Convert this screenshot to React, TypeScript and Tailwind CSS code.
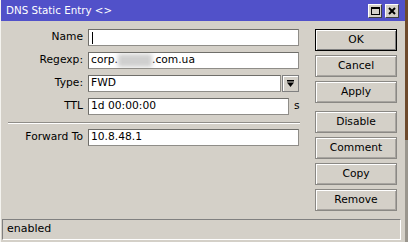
const Field = ({ children, className = "" }: { children?: React.ReactNode; className?: string }) => (
  <div
    className={`h-[17px] bg-white border border-[#8f8d88] border-t-[#6f6e6a] border-l-[#6f6e6a] flex items-center pl-[2px] text-black whitespace-nowrap overflow-hidden ${className}`}
  >
    {children}
  </div>
);

const Btn = ({ label, primary = false }: { label: string; primary?: boolean }) => (
  <button
    className={`h-[22px] w-[82px] bg-[#d4d0c8] text-black flex items-center justify-center border ${
      primary ? "border-black shadow-[inset_1px_1px_0_#ffffff,inset_-1px_-1px_0_#808080]" : "border-[#8a8884] shadow-[inset_1px_1px_0_#ffffff,inset_-1px_-1px_0_#a8a5a0]"
    }`}
  >
    {label}
  </button>
);

const Label = ({ text }: { text: string }) => (
  <div className="h-[17px] w-[87px] flex items-center justify-end pr-[5px] text-black">{text}</div>
);

export default function App() {
  return (
    <div
      className="w-[408px] h-[242px] flex bg-[#d4d0c8] overflow-hidden text-[10.7px]"
      style={{ fontFamily: '"DejaVu Sans", sans-serif' }}
    >
      <div className="w-[405px] h-full flex flex-col bg-[#d4d0c8] border-l border-[#f4f3ef]">
        {/* title bar */}
        <div className="h-[21px] bg-[#5151c9] flex items-center justify-between pl-[5px] pr-[4px] text-white text-[10.3px]">
          <span>DNS Static Entry &lt;&gt;</span>
          <div className="flex gap-[3px] mr-[2px]">
            <div className="w-[14px] h-[14px] bg-[#d4d0c8] border border-[#404040] border-t-white border-l-white flex items-center justify-center">
              <div className="w-[9px] h-[8px] border border-black border-t-2" />
            </div>
            <div className="w-[14px] h-[14px] bg-[#d4d0c8] border border-[#404040] border-t-white border-l-white flex items-center justify-center">
              <svg width="8" height="8" viewBox="0 0 8 8">
                <path d="M1 1 L7 7 M7 1 L1 7" stroke="#000" strokeWidth="2" />
              </svg>
            </div>
          </div>
        </div>

        {/* body */}
        <div className="flex-1 flex">
          <div className="w-[305px] pt-[8px] flex flex-col">
            <div className="flex flex-col gap-[6px]">
              <div className="flex items-center">
                <Label text="Name" />
                <Field className="w-[211px]">
                  <span className="block w-[1px] h-[12px] bg-black ml-[1px]" />
                </Field>
              </div>
              <div className="flex items-center">
                <Label text="Regexp:" />
                <Field className="w-[211px]">
                  <span>corp.</span>
                  <span className="inline-block w-[34px] h-[13px] bg-[#cfcfcf] blur-[2px]" />
                  <span>.com.ua</span>
                </Field>
              </div>
              <div className="flex items-center">
                <Label text="Type:" />
                <Field className="w-[193px]">FWD</Field>
                <div className="ml-[1px] w-[17px] h-[17px] bg-[#d4d0c8] border border-[#808080] shadow-[inset_1px_1px_0_#ffffff] flex items-center justify-center">
                  <svg width="9" height="9" viewBox="0 0 9 9">
                    <rect x="1" y="1" width="7" height="1.5" fill="#000" />
                    <path d="M1 3.5 H8 L4.5 8 Z" fill="#000" />
                  </svg>
                </div>
              </div>
              <div className="flex items-center">
                <Label text="TTL" />
                <Field className="w-[201px]">1d 00:00:00</Field>
                <span className="ml-[5px] text-black">s</span>
              </div>
            </div>
            <div className="ml-[7px] w-[292px] mt-[7px] mb-[5px] border-t border-[#8f8d88] border-b border-b-white" />
            <div className="flex items-center">
              <Label text="Forward To" />
              <Field className="w-[211px]">10.8.48.1</Field>
            </div>
          </div>

          <div className="pl-[9px] pt-[8px] flex flex-col">
            <div className="flex flex-col gap-[4px]">
              <Btn label="OK" primary />
              <Btn label="Cancel" />
              <Btn label="Apply" />
            </div>
            <div className="mt-[8px] flex flex-col gap-[4px]">
              <Btn label="Disable" />
              <Btn label="Comment" />
              <Btn label="Copy" />
              <Btn label="Remove" />
            </div>
          </div>
        </div>

        {/* status bar */}
        <div className="h-[21px] mx-[1px] mb-[2px] w-[399px] border border-[#808080] border-b-white border-r-white flex items-center pl-[4px] text-black text-[11px]">
          enabled
        </div>
      </div>
      <div className="w-[3px] h-full flex flex-col">
        <div className="h-[140px] bg-[#6e4a2c]" />
        <div className="flex-1 bg-[#9a968e]" />
      </div>
    </div>
  );
}
